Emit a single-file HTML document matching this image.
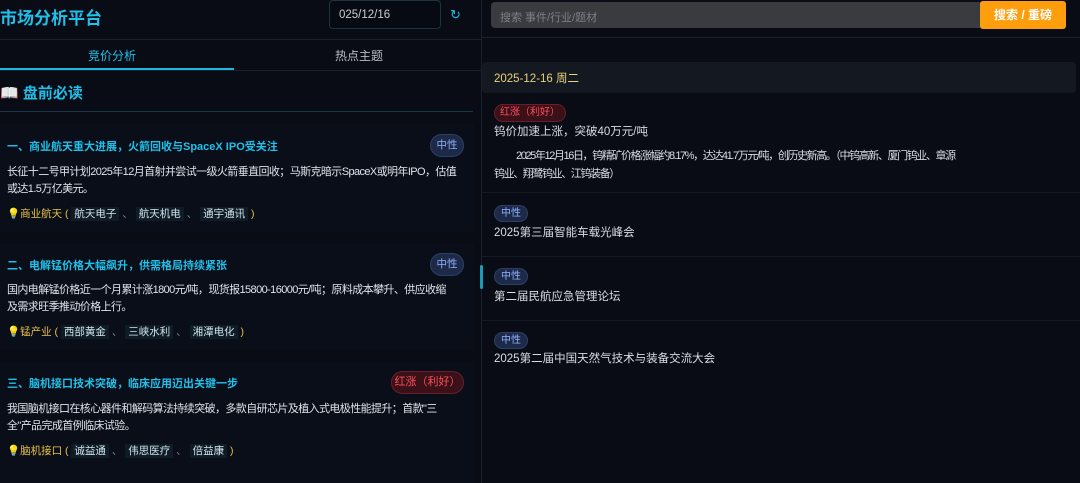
<!DOCTYPE html>
<html><head><meta charset="utf-8"><style>
*{margin:0;padding:0;box-sizing:border-box}
body{width:1080px;height:483px;overflow:hidden;background:#090c15;font-family:"Liberation Sans","Noto Sans CJK SC",sans-serif;color:#d8dce4;position:relative}
.a{position:absolute;white-space:nowrap}
.cy{color:#1fc0ea}
.badge{position:absolute;border-radius:12px;font-size:11px;text-align:center}
.neu{background:#1c2a48;border:1px solid #2d3f66;color:#8fb0ff}
.red{background:#3a1118;border:1px solid #6a1f28;color:#ff4d5a}
.card{position:absolute;left:0;width:474px;background:#0a0e18}
.t{font-size:11px;font-weight:bold;color:#1fc0ea}
.b{font-size:11px;line-height:17px;color:#dfe3ea;letter-spacing:-0.6px}
.tag{font-size:10.5px;color:#e8c04a}
.tag span.s{background:#0f1c26;color:#cfe3ec;padding:1px 3px}
.tag span.d{color:#7c8796}
</style></head><body>
<div class="a cy" style="left:0;top:4px;font-size:17px;font-weight:bold">市场分析平台</div>
<div class="a" style="left:329px;top:0;width:112px;height:29px;border:1px solid #1d3440;border-radius:4px;background:#070a12;font-size:11.5px;padding:8px 0 0 9px;color:#c8ccd4">025/12/16</div>
<div class="a cy" style="left:450px;top:7px;font-size:13px">↻</div>
<div class="a" style="left:0;top:39px;width:481px;height:1px;background:#1a202c"></div>
<div class="a cy" style="left:88px;top:47px;font-size:12px">竞价分析</div>
<div class="a" style="left:335px;top:47px;font-size:12px;color:#b8bcc4">热点主题</div>
<div class="a" style="left:0;top:68px;width:234px;height:2px;background:#1fb8e0"></div>
<div class="a" style="left:0;top:70px;width:481px;height:1px;background:#1a202c"></div>
<div class="a" style="left:0;top:82px;font-size:15px;font-weight:bold"><span style="color:#eee">📖</span> <span class="cy">盘前必读</span></div>
<div class="a" style="left:0;top:111px;width:473px;height:1px;background:#17384a"></div>

<div class="card" style="top:124px;height:108px"></div>
<div class="a t" style="left:7px;top:138px">一、商业航天重大进展，火箭回收与SpaceX IPO受关注</div>
<div class="badge neu" style="left:430px;top:134px;width:34px;height:23px;line-height:21px;font-size:10.5px">中性</div>
<div class="a b" style="left:7px;top:164px">长征十二号甲计划2025年12月首射并尝试一级火箭垂直回收；马斯克暗示SpaceX或明年IPO，估值<br>或达1.5万亿美元。</div>
<div class="a tag" style="left:7px;top:206px">💡商业航天 ( <span class="s">航天电子</span> <span class="d">、</span> <span class="s">航天机电</span> <span class="d">、</span> <span class="s">通宇通讯</span> )</div>

<div class="card" style="top:244px;height:106px"></div>
<div class="a t" style="left:7px;top:257px">二、电解锰价格大幅飙升，供需格局持续紧张</div>
<div class="badge neu" style="left:430px;top:253px;width:34px;height:23px;line-height:21px;font-size:10.5px">中性</div>
<div class="a b" style="left:7px;top:282px">国内电解锰价格近一个月累计涨1800元/吨，现货报15800-16000元/吨；原料成本攀升、供应收缩<br>及需求旺季推动价格上行。</div>
<div class="a tag" style="left:7px;top:324px">💡锰产业 ( <span class="s">西部黄金</span> <span class="d">、</span> <span class="s">三峡水利</span> <span class="d">、</span> <span class="s">湘潭电化</span> )</div>

<div class="card" style="top:362px;height:121px"></div>
<div class="a t" style="left:7px;top:375px">三、脑机接口技术突破，临床应用迈出关键一步</div>
<div class="badge red" style="left:391px;top:371px;width:73px;height:23px;line-height:21px">红涨（利好）</div>
<div class="a b" style="left:7px;top:401px">我国脑机接口在核心器件和解码算法持续突破，多款自研芯片及植入式电极性能提升；首款"三<br>全"产品完成首例临床试验。</div>
<div class="a tag" style="left:7px;top:443px">💡脑机接口 ( <span class="s">诚益通</span> <span class="d">、</span> <span class="s">伟思医疗</span> <span class="d">、</span> <span class="s">倍益康</span> )</div>

<div class="a" style="left:481px;top:0;width:1px;height:483px;background:#1a202c"></div>
<div class="a" style="left:480px;top:265px;width:3px;height:24px;background:#1a9bb8;border-radius:2px"></div>

<div class="a" style="left:491px;top:2px;width:490px;height:26px;background:#3a3b3f;border-radius:4px 0 0 4px;font-size:11px;color:#7d7f85;padding:7px 0 0 9px">搜索 事件/行业/题材</div>
<div class="a" style="left:980px;top:1px;width:86px;height:28px;background:#ff9e0c;border-radius:3px;color:#fff;font-size:12px;font-weight:bold;text-align:center;line-height:28px">搜索 / 重磅</div>
<div class="a" style="left:482px;top:37px;width:598px;height:1px;background:#1a202c"></div>
<div class="a" style="left:482px;top:62px;width:594px;height:31px;background:#141821;border-radius:4px"></div>
<div class="a" style="left:494px;top:70px;font-size:11.5px;color:#e9d37a">2025-12-16 周二</div>

<div class="badge red" style="left:494px;top:104px;width:72px;height:18px;line-height:16px;font-size:10px">红涨（利好）</div>
<div class="a" style="left:494px;top:123px;font-size:11.5px">钨价加速上涨，突破40万元/吨</div>
<div class="a" style="left:494px;top:147px;font-size:11px;line-height:18px;letter-spacing:-1.4px"><span style="display:inline-block;width:22px"></span>2025年12月16日，钨精矿价格涨幅约8.17%，达达41.7万元/吨，创历史新高。（中钨高新、厦门钨业、章源<br>钨业、翔鹭钨业、江钨装备）</div>
<div class="a" style="left:482px;top:192px;width:598px;height:1px;background:#141a24"></div>

<div class="badge neu" style="left:494px;top:205px;width:34px;height:17px;line-height:15px;font-size:10px">中性</div>
<div class="a" style="left:494px;top:224px;font-size:11.5px">2025第三届智能车载光峰会</div>
<div class="a" style="left:482px;top:256px;width:598px;height:1px;background:#141a24"></div>

<div class="badge neu" style="left:494px;top:268px;width:34px;height:17px;line-height:15px;font-size:10px">中性</div>
<div class="a" style="left:494px;top:288px;font-size:11.5px">第二届民航应急管理论坛</div>
<div class="a" style="left:482px;top:320px;width:598px;height:1px;background:#141a24"></div>

<div class="badge neu" style="left:494px;top:332px;width:34px;height:17px;line-height:15px;font-size:10px">中性</div>
<div class="a" style="left:494px;top:350px;font-size:11.5px">2025第二届中国天然气技术与装备交流大会</div>
</body></html>
